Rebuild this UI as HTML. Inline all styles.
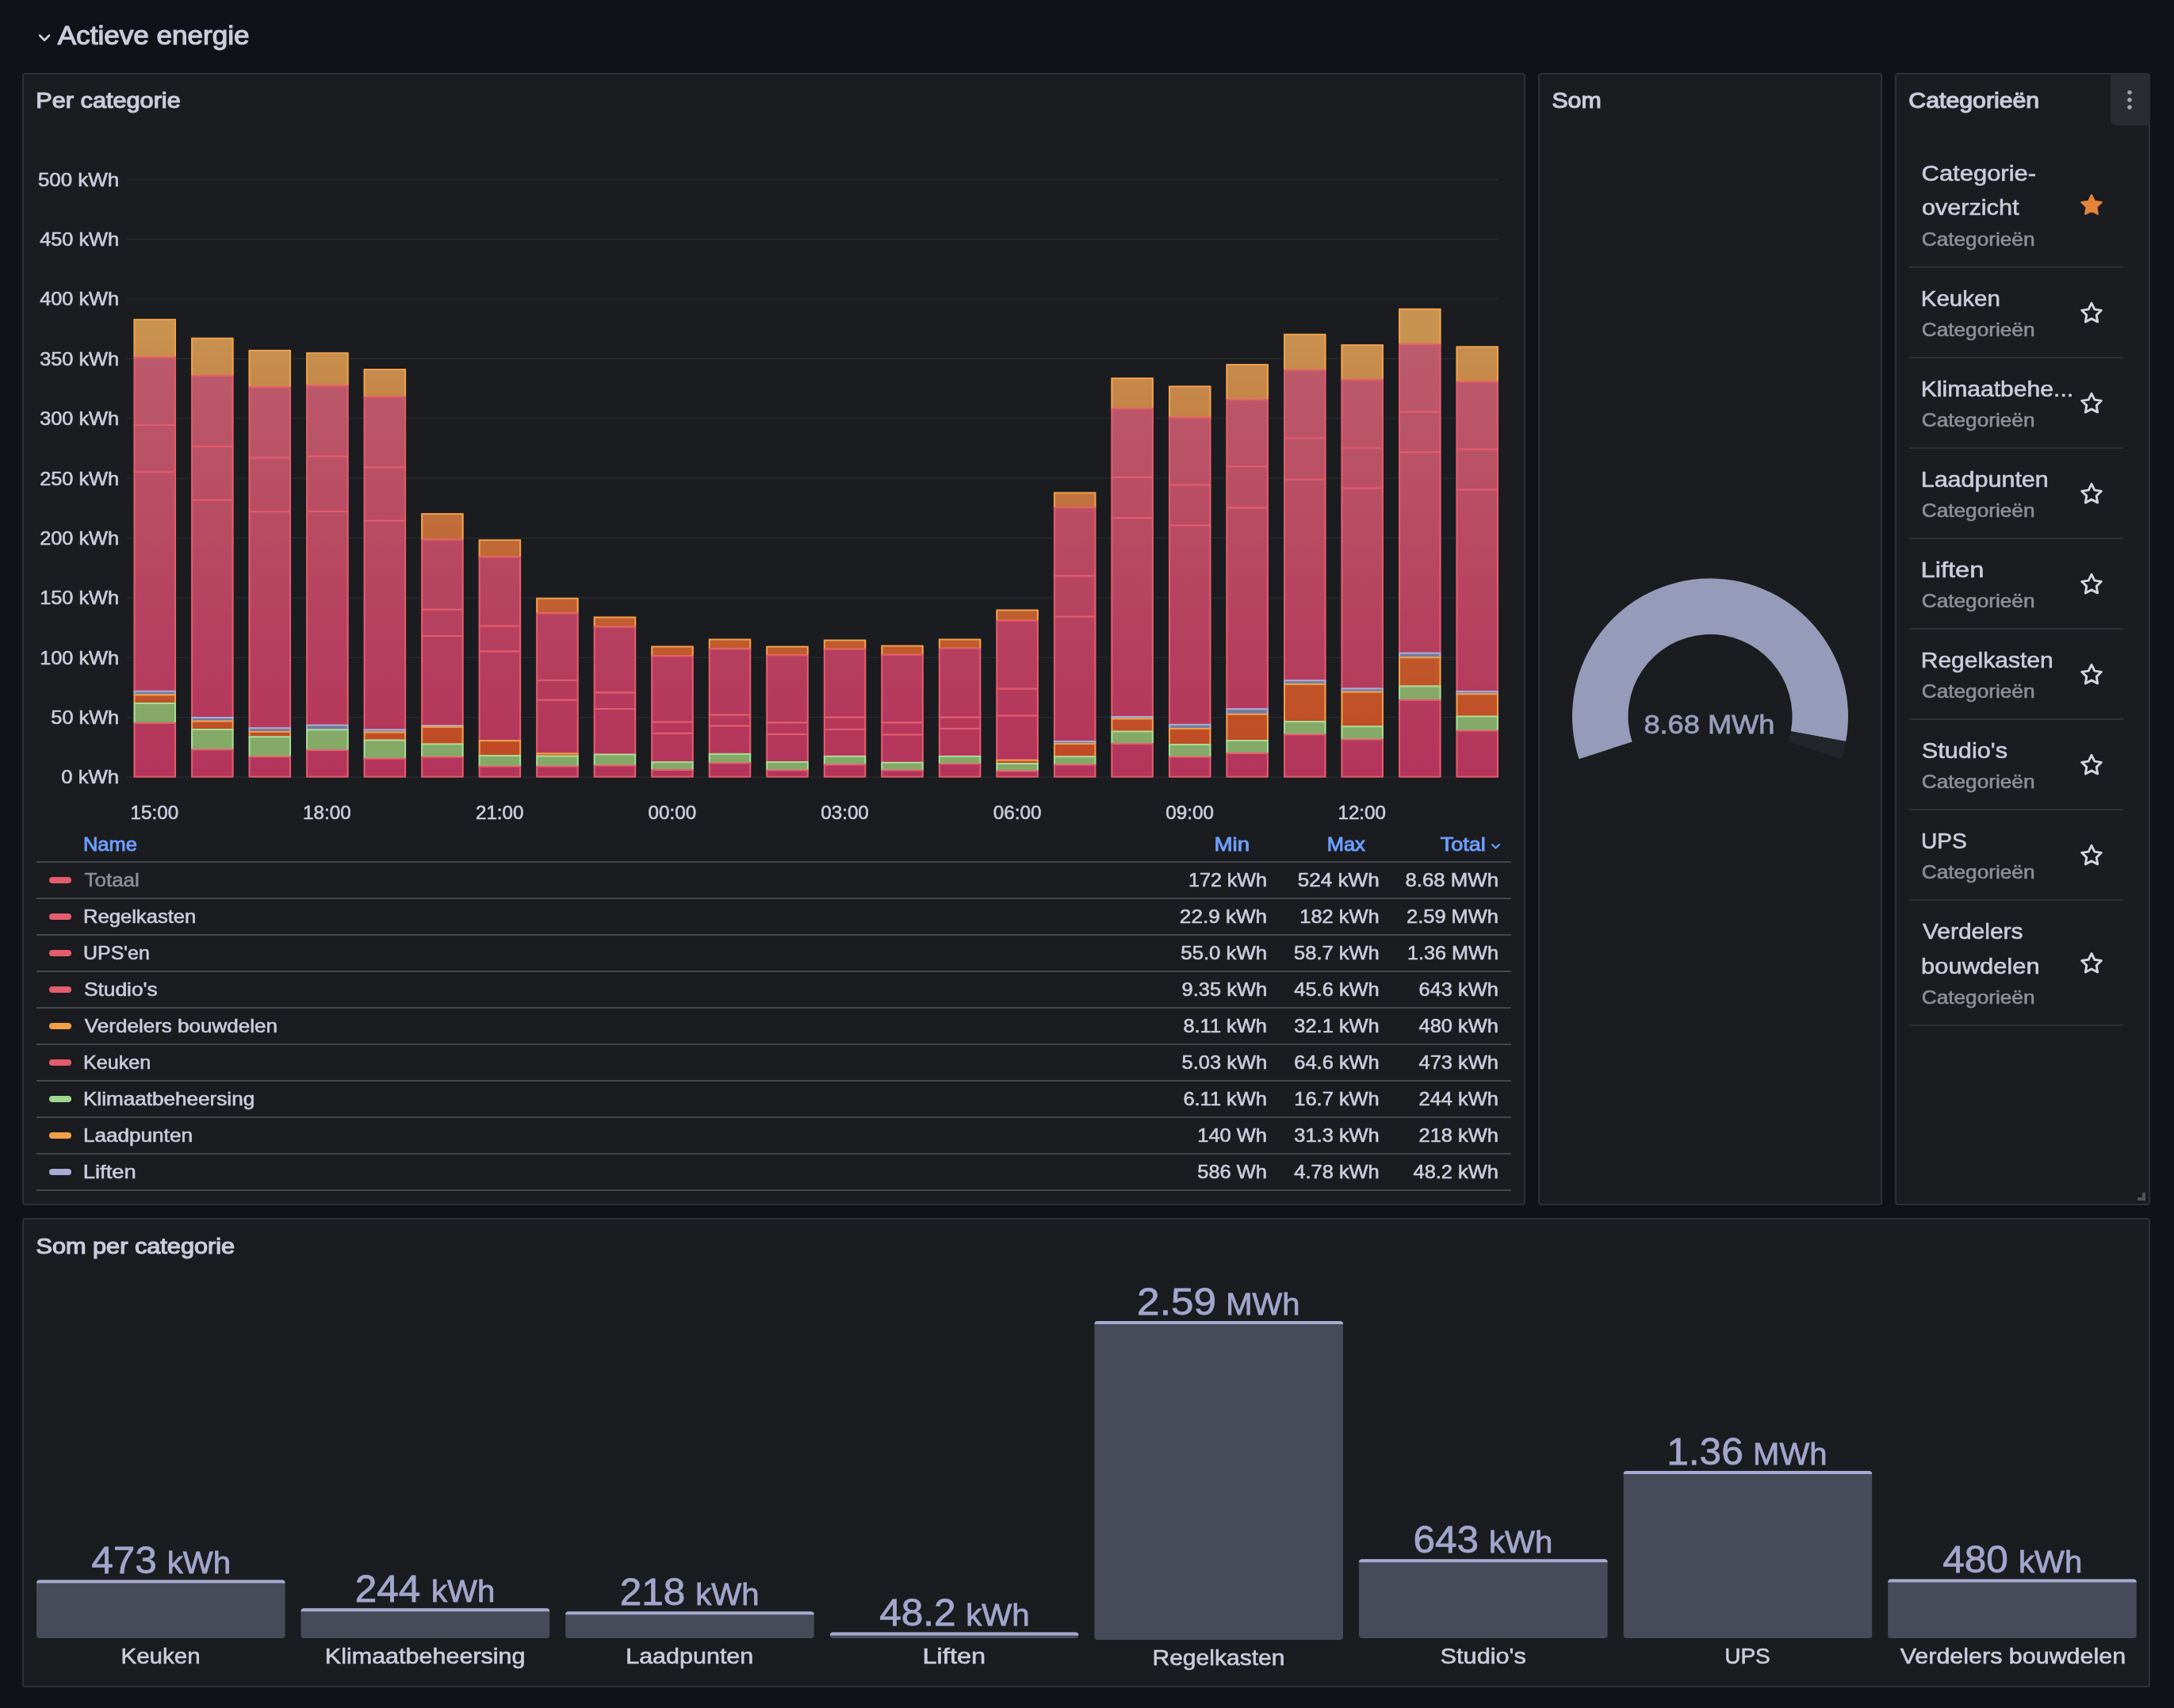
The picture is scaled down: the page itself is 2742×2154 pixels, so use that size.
<!DOCTYPE html>
<html><head><meta charset="utf-8"><title>Actieve energie</title>
<style>
html,body{margin:0;padding:0;background:#111217;width:2742px;height:2154px;overflow:hidden;font-family:"Liberation Sans",sans-serif;}
.panel{position:absolute;box-sizing:border-box;background:#1a1c20;border:2px solid #2f3035;border-radius:4px;}
svg{position:absolute;left:0;top:0;will-change:transform;}
text{font-family:"Liberation Sans",sans-serif;}
.t{fill:#ccccdc;stroke:#ccccdc;stroke-width:0.6px}
.ttl{fill:#ccccdc;stroke:#ccccdc;stroke-width:1.2px}
.hd{fill:#6e9fff;stroke:#6e9fff;stroke-width:0.9px}
.dim{fill:#8e8f98;stroke:#8e8f98;stroke-width:0.6px}
.gauge{fill:#9a9dbc;stroke:#9a9dbc;stroke-width:0.8px}
.bv{fill:#a3a6cc;stroke:#a3a6cc;stroke-width:0.8px}
</style></head><body>
<div class="panel" style="left:28px;top:92px;width:1896px;height:1428px"></div>
<div class="panel" style="left:1940px;top:92px;width:434px;height:1428px"></div>
<div class="panel" style="left:2390px;top:92px;width:322px;height:1428px"></div>
<div class="panel" style="left:28px;top:1536px;width:2684px;height:592px"></div>
<div style="position:absolute;left:2662px;top:92px;width:50px;height:66px;background:#2a2c31;border-radius:0 4px 0 6px"></div>
<svg width="2742" height="2154" viewBox="0 0 2742 2154">
<path d="M50.2 44.8 L56.1 50.7 L62 44.8" fill="none" stroke="#ccccdc" stroke-width="2.7" stroke-linecap="round" stroke-linejoin="round"/>
<text x="72.70" y="56.1" class="ttl" style="font-size:33px;" textLength="241.97" lengthAdjust="spacingAndGlyphs">Actieve energie</text>
<text x="45.39" y="136.2" class="ttl" style="font-size:28px;" textLength="182.35" lengthAdjust="spacingAndGlyphs">Per categorie</text>
<text x="1957.40" y="136.3" class="ttl" style="font-size:28px;" textLength="62.18" lengthAdjust="spacingAndGlyphs">Som</text>
<text x="2407.39" y="136.3" class="ttl" style="font-size:28px;" textLength="164.75" lengthAdjust="spacingAndGlyphs">Categorieën</text>
<text x="45.49" y="1580.5" class="ttl" style="font-size:28px;" textLength="250.61" lengthAdjust="spacingAndGlyphs">Som per categorie</text>
<circle cx="2686" cy="116.6" r="2.7" fill="#a5a6ad"/>
<circle cx="2686" cy="126" r="2.7" fill="#a5a6ad"/>
<circle cx="2686" cy="135.3" r="2.7" fill="#a5a6ad"/>
<path d="M2696 1510 h6 v-6 h4 v10 h-10 z" fill="#525358"/>
<defs><linearGradient id="gr" gradientUnits="userSpaceOnUse" x1="0" y1="226" x2="0" y2="980"><stop offset="0" stop-color="#be6470"/><stop offset="0.31" stop-color="#bb5a6a"/><stop offset="0.55" stop-color="#b94d63"/><stop offset="0.76" stop-color="#b6405f"/><stop offset="1" stop-color="#b4345b"/></linearGradient><linearGradient id="go" gradientUnits="userSpaceOnUse" x1="0" y1="226" x2="0" y2="980"><stop offset="0" stop-color="#cc9e58"/><stop offset="0.26" stop-color="#c8924f"/><stop offset="0.54" stop-color="#c0713d"/><stop offset="0.72" stop-color="#c05f2f"/><stop offset="1" stop-color="#c04722"/></linearGradient><linearGradient id="gg" gradientUnits="userSpaceOnUse" x1="0" y1="226" x2="0" y2="980"><stop offset="0" stop-color="#8fae72"/><stop offset="1" stop-color="#84a866"/></linearGradient><linearGradient id="gl" gradientUnits="userSpaceOnUse" x1="0" y1="226" x2="0" y2="980"><stop offset="0" stop-color="#8a8fb5"/><stop offset="1" stop-color="#6d7898"/></linearGradient></defs>
<rect x="160" y="979.5" width="1730" height="1" fill="#2c2e33"/>
<rect x="160" y="904.13" width="1730" height="1" fill="#2c2e33"/>
<rect x="160" y="828.76" width="1730" height="1" fill="#2c2e33"/>
<rect x="160" y="753.39" width="1730" height="1" fill="#2c2e33"/>
<rect x="160" y="678.02" width="1730" height="1" fill="#2c2e33"/>
<rect x="160" y="602.65" width="1730" height="1" fill="#2c2e33"/>
<rect x="160" y="527.28" width="1730" height="1" fill="#2c2e33"/>
<rect x="160" y="451.91" width="1730" height="1" fill="#2c2e33"/>
<rect x="160" y="376.54" width="1730" height="1" fill="#2c2e33"/>
<rect x="160" y="301.17" width="1730" height="1" fill="#2c2e33"/>
<rect x="160" y="225.8" width="1730" height="1" fill="#2c2e33"/>
<rect x="168.6" y="403.1" width="53.4" height="47.6" fill="url(#go)"/><rect x="169.6" y="403.1" width="51.4" height="47.6" fill="none" stroke="#f0a04c" stroke-width="2"/>
<rect x="168.6" y="450.7" width="53.4" height="85.3" fill="url(#gr)"/><rect x="169.6" y="450.7" width="51.4" height="85.3" fill="none" stroke="#e45c6c" stroke-width="2"/>
<rect x="168.6" y="536" width="53.4" height="59.4" fill="url(#gr)"/><rect x="169.6" y="536" width="51.4" height="59.4" fill="none" stroke="#e45c6c" stroke-width="2"/>
<rect x="168.6" y="595.4" width="53.4" height="276.4" fill="url(#gr)"/><rect x="169.6" y="595.4" width="51.4" height="276.4" fill="none" stroke="#e45c6c" stroke-width="2"/>
<rect x="168.6" y="871.8" width="53.4" height="4.6" fill="url(#gl)"/><rect x="169.6" y="871.8" width="51.4" height="4.6" fill="none" stroke="#aaacd4" stroke-width="2"/>
<rect x="168.6" y="876.4" width="53.4" height="10.6" fill="url(#go)"/><rect x="169.6" y="876.4" width="51.4" height="10.6" fill="none" stroke="#f0a04c" stroke-width="2"/>
<rect x="168.6" y="887" width="53.4" height="25" fill="url(#gg)"/><rect x="169.6" y="887" width="51.4" height="25" fill="none" stroke="#a6dc98" stroke-width="2"/>
<rect x="168.6" y="912" width="53.4" height="67.6" fill="url(#gr)"/><rect x="169.6" y="912" width="51.4" height="67.6" fill="none" stroke="#e45c6c" stroke-width="2"/>
<rect x="241.12" y="426.7" width="53.4" height="47.2" fill="url(#go)"/><rect x="242.12" y="426.7" width="51.4" height="47.2" fill="none" stroke="#f0a04c" stroke-width="2"/>
<rect x="241.12" y="473.9" width="53.4" height="89" fill="url(#gr)"/><rect x="242.12" y="473.9" width="51.4" height="89" fill="none" stroke="#e45c6c" stroke-width="2"/>
<rect x="241.12" y="562.9" width="53.4" height="67.8" fill="url(#gr)"/><rect x="242.12" y="562.9" width="51.4" height="67.8" fill="none" stroke="#e45c6c" stroke-width="2"/>
<rect x="241.12" y="630.7" width="53.4" height="274.3" fill="url(#gr)"/><rect x="242.12" y="630.7" width="51.4" height="274.3" fill="none" stroke="#e45c6c" stroke-width="2"/>
<rect x="241.12" y="905" width="53.4" height="4.6" fill="url(#gl)"/><rect x="242.12" y="905" width="51.4" height="4.6" fill="none" stroke="#aaacd4" stroke-width="2"/>
<rect x="241.12" y="909.6" width="53.4" height="10.4" fill="url(#go)"/><rect x="242.12" y="909.6" width="51.4" height="10.4" fill="none" stroke="#f0a04c" stroke-width="2"/>
<rect x="241.12" y="920" width="53.4" height="25.4" fill="url(#gg)"/><rect x="242.12" y="920" width="51.4" height="25.4" fill="none" stroke="#a6dc98" stroke-width="2"/>
<rect x="241.12" y="945.4" width="53.4" height="34.2" fill="url(#gr)"/><rect x="242.12" y="945.4" width="51.4" height="34.2" fill="none" stroke="#e45c6c" stroke-width="2"/>
<rect x="313.64" y="442.1" width="53.4" height="46.1" fill="url(#go)"/><rect x="314.64" y="442.1" width="51.4" height="46.1" fill="none" stroke="#f0a04c" stroke-width="2"/>
<rect x="313.64" y="488.2" width="53.4" height="89.3" fill="url(#gr)"/><rect x="314.64" y="488.2" width="51.4" height="89.3" fill="none" stroke="#e45c6c" stroke-width="2"/>
<rect x="313.64" y="577.5" width="53.4" height="67.9" fill="url(#gr)"/><rect x="314.64" y="577.5" width="51.4" height="67.9" fill="none" stroke="#e45c6c" stroke-width="2"/>
<rect x="313.64" y="645.4" width="53.4" height="272.8" fill="url(#gr)"/><rect x="314.64" y="645.4" width="51.4" height="272.8" fill="none" stroke="#e45c6c" stroke-width="2"/>
<rect x="313.64" y="918.2" width="53.4" height="4.7" fill="url(#gl)"/><rect x="314.64" y="918.2" width="51.4" height="4.7" fill="none" stroke="#aaacd4" stroke-width="2"/>
<rect x="313.64" y="922.9" width="53.4" height="6.4" fill="url(#go)"/><rect x="314.64" y="922.9" width="51.4" height="6.4" fill="none" stroke="#f0a04c" stroke-width="2"/>
<rect x="313.64" y="929.3" width="53.4" height="25" fill="url(#gg)"/><rect x="314.64" y="929.3" width="51.4" height="25" fill="none" stroke="#a6dc98" stroke-width="2"/>
<rect x="313.64" y="954.3" width="53.4" height="25.3" fill="url(#gr)"/><rect x="314.64" y="954.3" width="51.4" height="25.3" fill="none" stroke="#e45c6c" stroke-width="2"/>
<rect x="386.16" y="445.3" width="53.4" height="41.1" fill="url(#go)"/><rect x="387.16" y="445.3" width="51.4" height="41.1" fill="none" stroke="#f0a04c" stroke-width="2"/>
<rect x="386.16" y="486.4" width="53.4" height="89.3" fill="url(#gr)"/><rect x="387.16" y="486.4" width="51.4" height="89.3" fill="none" stroke="#e45c6c" stroke-width="2"/>
<rect x="386.16" y="575.7" width="53.4" height="69.3" fill="url(#gr)"/><rect x="387.16" y="575.7" width="51.4" height="69.3" fill="none" stroke="#e45c6c" stroke-width="2"/>
<rect x="386.16" y="645" width="53.4" height="269.6" fill="url(#gr)"/><rect x="387.16" y="645" width="51.4" height="269.6" fill="none" stroke="#e45c6c" stroke-width="2"/>
<rect x="386.16" y="914.6" width="53.4" height="5.8" fill="url(#gl)"/><rect x="387.16" y="914.6" width="51.4" height="5.8" fill="none" stroke="#aaacd4" stroke-width="2"/>
<rect x="386.16" y="920.4" width="53.4" height="25.7" fill="url(#gg)"/><rect x="387.16" y="920.4" width="51.4" height="25.7" fill="none" stroke="#a6dc98" stroke-width="2"/>
<rect x="386.16" y="946.1" width="53.4" height="33.5" fill="url(#gr)"/><rect x="387.16" y="946.1" width="51.4" height="33.5" fill="none" stroke="#e45c6c" stroke-width="2"/>
<rect x="458.68" y="466" width="53.4" height="34.4" fill="url(#go)"/><rect x="459.68" y="466" width="51.4" height="34.4" fill="none" stroke="#f0a04c" stroke-width="2"/>
<rect x="458.68" y="500.4" width="53.4" height="89.2" fill="url(#gr)"/><rect x="459.68" y="500.4" width="51.4" height="89.2" fill="none" stroke="#e45c6c" stroke-width="2"/>
<rect x="458.68" y="589.6" width="53.4" height="67.2" fill="url(#gr)"/><rect x="459.68" y="589.6" width="51.4" height="67.2" fill="none" stroke="#e45c6c" stroke-width="2"/>
<rect x="458.68" y="656.8" width="53.4" height="263.6" fill="url(#gr)"/><rect x="459.68" y="656.8" width="51.4" height="263.6" fill="none" stroke="#e45c6c" stroke-width="2"/>
<rect x="458.68" y="920.4" width="53.4" height="3.2" fill="url(#gl)"/><rect x="459.68" y="920.4" width="51.4" height="3.2" fill="none" stroke="#aaacd4" stroke-width="2"/>
<rect x="458.68" y="923.6" width="53.4" height="10" fill="url(#go)"/><rect x="459.68" y="923.6" width="51.4" height="10" fill="none" stroke="#f0a04c" stroke-width="2"/>
<rect x="458.68" y="933.6" width="53.4" height="23.2" fill="url(#gg)"/><rect x="459.68" y="933.6" width="51.4" height="23.2" fill="none" stroke="#a6dc98" stroke-width="2"/>
<rect x="458.68" y="956.8" width="53.4" height="22.8" fill="url(#gr)"/><rect x="459.68" y="956.8" width="51.4" height="22.8" fill="none" stroke="#e45c6c" stroke-width="2"/>
<rect x="531.2" y="648.1" width="53.4" height="32.6" fill="url(#go)"/><rect x="532.2" y="648.1" width="51.4" height="32.6" fill="none" stroke="#f0a04c" stroke-width="2"/>
<rect x="531.2" y="680.7" width="53.4" height="88.1" fill="url(#gr)"/><rect x="532.2" y="680.7" width="51.4" height="88.1" fill="none" stroke="#e45c6c" stroke-width="2"/>
<rect x="531.2" y="768.8" width="53.4" height="33.2" fill="url(#gr)"/><rect x="532.2" y="768.8" width="51.4" height="33.2" fill="none" stroke="#e45c6c" stroke-width="2"/>
<rect x="531.2" y="802" width="53.4" height="113.3" fill="url(#gr)"/><rect x="532.2" y="802" width="51.4" height="113.3" fill="none" stroke="#e45c6c" stroke-width="2"/>
<rect x="531.2" y="915.3" width="53.4" height="1.5" fill="url(#gl)"/><rect x="532.2" y="915.3" width="51.4" height="1.5" fill="none" stroke="#aaacd4" stroke-width="2"/>
<rect x="531.2" y="916.8" width="53.4" height="21.7" fill="url(#go)"/><rect x="532.2" y="916.8" width="51.4" height="21.7" fill="none" stroke="#f0a04c" stroke-width="2"/>
<rect x="531.2" y="938.5" width="53.4" height="16.2" fill="url(#gg)"/><rect x="532.2" y="938.5" width="51.4" height="16.2" fill="none" stroke="#a6dc98" stroke-width="2"/>
<rect x="531.2" y="954.7" width="53.4" height="24.9" fill="url(#gr)"/><rect x="532.2" y="954.7" width="51.4" height="24.9" fill="none" stroke="#e45c6c" stroke-width="2"/>
<rect x="603.72" y="681.2" width="53.4" height="21.1" fill="url(#go)"/><rect x="604.72" y="681.2" width="51.4" height="21.1" fill="none" stroke="#f0a04c" stroke-width="2"/>
<rect x="603.72" y="702.3" width="53.4" height="87.3" fill="url(#gr)"/><rect x="604.72" y="702.3" width="51.4" height="87.3" fill="none" stroke="#e45c6c" stroke-width="2"/>
<rect x="603.72" y="789.6" width="53.4" height="31.9" fill="url(#gr)"/><rect x="604.72" y="789.6" width="51.4" height="31.9" fill="none" stroke="#e45c6c" stroke-width="2"/>
<rect x="603.72" y="821.5" width="53.4" height="112.6" fill="url(#gr)"/><rect x="604.72" y="821.5" width="51.4" height="112.6" fill="none" stroke="#e45c6c" stroke-width="2"/>
<rect x="603.72" y="934.1" width="53.4" height="18.9" fill="url(#go)"/><rect x="604.72" y="934.1" width="51.4" height="18.9" fill="none" stroke="#f0a04c" stroke-width="2"/>
<rect x="603.72" y="953" width="53.4" height="13.6" fill="url(#gg)"/><rect x="604.72" y="953" width="51.4" height="13.6" fill="none" stroke="#a6dc98" stroke-width="2"/>
<rect x="603.72" y="966.6" width="53.4" height="13" fill="url(#gr)"/><rect x="604.72" y="966.6" width="51.4" height="13" fill="none" stroke="#e45c6c" stroke-width="2"/>
<rect x="676.24" y="754.7" width="53.4" height="18.7" fill="url(#go)"/><rect x="677.24" y="754.7" width="51.4" height="18.7" fill="none" stroke="#f0a04c" stroke-width="2"/>
<rect x="676.24" y="773.4" width="53.4" height="84.5" fill="url(#gr)"/><rect x="677.24" y="773.4" width="51.4" height="84.5" fill="none" stroke="#e45c6c" stroke-width="2"/>
<rect x="676.24" y="857.9" width="53.4" height="24.9" fill="url(#gr)"/><rect x="677.24" y="857.9" width="51.4" height="24.9" fill="none" stroke="#e45c6c" stroke-width="2"/>
<rect x="676.24" y="882.8" width="53.4" height="67.6" fill="url(#gr)"/><rect x="677.24" y="882.8" width="51.4" height="67.6" fill="none" stroke="#e45c6c" stroke-width="2"/>
<rect x="676.24" y="950.4" width="53.4" height="3.2" fill="url(#go)"/><rect x="677.24" y="950.4" width="51.4" height="3.2" fill="none" stroke="#f0a04c" stroke-width="2"/>
<rect x="676.24" y="953.6" width="53.4" height="13" fill="url(#gg)"/><rect x="677.24" y="953.6" width="51.4" height="13" fill="none" stroke="#a6dc98" stroke-width="2"/>
<rect x="676.24" y="966.6" width="53.4" height="13" fill="url(#gr)"/><rect x="677.24" y="966.6" width="51.4" height="13" fill="none" stroke="#e45c6c" stroke-width="2"/>
<rect x="748.76" y="778.5" width="53.4" height="12.2" fill="url(#go)"/><rect x="749.76" y="778.5" width="51.4" height="12.2" fill="none" stroke="#f0a04c" stroke-width="2"/>
<rect x="748.76" y="790.7" width="53.4" height="82.8" fill="url(#gr)"/><rect x="749.76" y="790.7" width="51.4" height="82.8" fill="none" stroke="#e45c6c" stroke-width="2"/>
<rect x="748.76" y="873.5" width="53.4" height="20.5" fill="url(#gr)"/><rect x="749.76" y="873.5" width="51.4" height="20.5" fill="none" stroke="#e45c6c" stroke-width="2"/>
<rect x="748.76" y="894" width="53.4" height="57.5" fill="url(#gr)"/><rect x="749.76" y="894" width="51.4" height="57.5" fill="none" stroke="#e45c6c" stroke-width="2"/>
<rect x="748.76" y="951.5" width="53.4" height="14" fill="url(#gg)"/><rect x="749.76" y="951.5" width="51.4" height="14" fill="none" stroke="#a6dc98" stroke-width="2"/>
<rect x="748.76" y="965.5" width="53.4" height="14.1" fill="url(#gr)"/><rect x="749.76" y="965.5" width="51.4" height="14.1" fill="none" stroke="#e45c6c" stroke-width="2"/>
<rect x="821.28" y="815.5" width="53.4" height="12" fill="url(#go)"/><rect x="822.28" y="815.5" width="51.4" height="12" fill="none" stroke="#f0a04c" stroke-width="2"/>
<rect x="821.28" y="827.5" width="53.4" height="83.2" fill="url(#gr)"/><rect x="822.28" y="827.5" width="51.4" height="83.2" fill="none" stroke="#e45c6c" stroke-width="2"/>
<rect x="821.28" y="910.7" width="53.4" height="14.1" fill="url(#gr)"/><rect x="822.28" y="910.7" width="51.4" height="14.1" fill="none" stroke="#e45c6c" stroke-width="2"/>
<rect x="821.28" y="924.8" width="53.4" height="36.4" fill="url(#gr)"/><rect x="822.28" y="924.8" width="51.4" height="36.4" fill="none" stroke="#e45c6c" stroke-width="2"/>
<rect x="821.28" y="961.2" width="53.4" height="9.8" fill="url(#gg)"/><rect x="822.28" y="961.2" width="51.4" height="9.8" fill="none" stroke="#a6dc98" stroke-width="2"/>
<rect x="821.28" y="971" width="53.4" height="8.6" fill="url(#gr)"/><rect x="822.28" y="971" width="51.4" height="8.6" fill="none" stroke="#e45c6c" stroke-width="2"/>
<rect x="893.8" y="806.5" width="53.4" height="11.8" fill="url(#go)"/><rect x="894.8" y="806.5" width="51.4" height="11.8" fill="none" stroke="#f0a04c" stroke-width="2"/>
<rect x="893.8" y="818.3" width="53.4" height="83.4" fill="url(#gr)"/><rect x="894.8" y="818.3" width="51.4" height="83.4" fill="none" stroke="#e45c6c" stroke-width="2"/>
<rect x="893.8" y="901.7" width="53.4" height="13.7" fill="url(#gr)"/><rect x="894.8" y="901.7" width="51.4" height="13.7" fill="none" stroke="#e45c6c" stroke-width="2"/>
<rect x="893.8" y="915.4" width="53.4" height="35.5" fill="url(#gr)"/><rect x="894.8" y="915.4" width="51.4" height="35.5" fill="none" stroke="#e45c6c" stroke-width="2"/>
<rect x="893.8" y="950.9" width="53.4" height="11.5" fill="url(#gg)"/><rect x="894.8" y="950.9" width="51.4" height="11.5" fill="none" stroke="#a6dc98" stroke-width="2"/>
<rect x="893.8" y="962.4" width="53.4" height="17.2" fill="url(#gr)"/><rect x="894.8" y="962.4" width="51.4" height="17.2" fill="none" stroke="#e45c6c" stroke-width="2"/>
<rect x="966.32" y="815.6" width="53.4" height="10.8" fill="url(#go)"/><rect x="967.32" y="815.6" width="51.4" height="10.8" fill="none" stroke="#f0a04c" stroke-width="2"/>
<rect x="966.32" y="826.4" width="53.4" height="85" fill="url(#gr)"/><rect x="967.32" y="826.4" width="51.4" height="85" fill="none" stroke="#e45c6c" stroke-width="2"/>
<rect x="966.32" y="911.4" width="53.4" height="14.6" fill="url(#gr)"/><rect x="967.32" y="911.4" width="51.4" height="14.6" fill="none" stroke="#e45c6c" stroke-width="2"/>
<rect x="966.32" y="926" width="53.4" height="35" fill="url(#gr)"/><rect x="967.32" y="926" width="51.4" height="35" fill="none" stroke="#e45c6c" stroke-width="2"/>
<rect x="966.32" y="961" width="53.4" height="10.5" fill="url(#gg)"/><rect x="967.32" y="961" width="51.4" height="10.5" fill="none" stroke="#a6dc98" stroke-width="2"/>
<rect x="966.32" y="971.5" width="53.4" height="8.1" fill="url(#gr)"/><rect x="967.32" y="971.5" width="51.4" height="8.1" fill="none" stroke="#e45c6c" stroke-width="2"/>
<rect x="1038.84" y="807.5" width="53.4" height="11.2" fill="url(#go)"/><rect x="1039.84" y="807.5" width="51.4" height="11.2" fill="none" stroke="#f0a04c" stroke-width="2"/>
<rect x="1038.84" y="818.7" width="53.4" height="86" fill="url(#gr)"/><rect x="1039.84" y="818.7" width="51.4" height="86" fill="none" stroke="#e45c6c" stroke-width="2"/>
<rect x="1038.84" y="904.7" width="53.4" height="15.2" fill="url(#gr)"/><rect x="1039.84" y="904.7" width="51.4" height="15.2" fill="none" stroke="#e45c6c" stroke-width="2"/>
<rect x="1038.84" y="919.9" width="53.4" height="34" fill="url(#gr)"/><rect x="1039.84" y="919.9" width="51.4" height="34" fill="none" stroke="#e45c6c" stroke-width="2"/>
<rect x="1038.84" y="953.9" width="53.4" height="10.5" fill="url(#gg)"/><rect x="1039.84" y="953.9" width="51.4" height="10.5" fill="none" stroke="#a6dc98" stroke-width="2"/>
<rect x="1038.84" y="964.4" width="53.4" height="15.2" fill="url(#gr)"/><rect x="1039.84" y="964.4" width="51.4" height="15.2" fill="none" stroke="#e45c6c" stroke-width="2"/>
<rect x="1111.36" y="814.6" width="53.4" height="11.2" fill="url(#go)"/><rect x="1112.36" y="814.6" width="51.4" height="11.2" fill="none" stroke="#f0a04c" stroke-width="2"/>
<rect x="1111.36" y="825.8" width="53.4" height="85.6" fill="url(#gr)"/><rect x="1112.36" y="825.8" width="51.4" height="85.6" fill="none" stroke="#e45c6c" stroke-width="2"/>
<rect x="1111.36" y="911.4" width="53.4" height="15.2" fill="url(#gr)"/><rect x="1112.36" y="911.4" width="51.4" height="15.2" fill="none" stroke="#e45c6c" stroke-width="2"/>
<rect x="1111.36" y="926.6" width="53.4" height="35.2" fill="url(#gr)"/><rect x="1112.36" y="926.6" width="51.4" height="35.2" fill="none" stroke="#e45c6c" stroke-width="2"/>
<rect x="1111.36" y="961.8" width="53.4" height="9.7" fill="url(#gg)"/><rect x="1112.36" y="961.8" width="51.4" height="9.7" fill="none" stroke="#a6dc98" stroke-width="2"/>
<rect x="1111.36" y="971.5" width="53.4" height="8.1" fill="url(#gr)"/><rect x="1112.36" y="971.5" width="51.4" height="8.1" fill="none" stroke="#e45c6c" stroke-width="2"/>
<rect x="1183.88" y="806.5" width="53.4" height="11.2" fill="url(#go)"/><rect x="1184.88" y="806.5" width="51.4" height="11.2" fill="none" stroke="#f0a04c" stroke-width="2"/>
<rect x="1183.88" y="817.7" width="53.4" height="87" fill="url(#gr)"/><rect x="1184.88" y="817.7" width="51.4" height="87" fill="none" stroke="#e45c6c" stroke-width="2"/>
<rect x="1183.88" y="904.7" width="53.4" height="14.2" fill="url(#gr)"/><rect x="1184.88" y="904.7" width="51.4" height="14.2" fill="none" stroke="#e45c6c" stroke-width="2"/>
<rect x="1183.88" y="918.9" width="53.4" height="35" fill="url(#gr)"/><rect x="1184.88" y="918.9" width="51.4" height="35" fill="none" stroke="#e45c6c" stroke-width="2"/>
<rect x="1183.88" y="953.9" width="53.4" height="9.5" fill="url(#gg)"/><rect x="1184.88" y="953.9" width="51.4" height="9.5" fill="none" stroke="#a6dc98" stroke-width="2"/>
<rect x="1183.88" y="963.4" width="53.4" height="16.2" fill="url(#gr)"/><rect x="1184.88" y="963.4" width="51.4" height="16.2" fill="none" stroke="#e45c6c" stroke-width="2"/>
<rect x="1256.4" y="769.5" width="53.4" height="13.2" fill="url(#go)"/><rect x="1257.4" y="769.5" width="51.4" height="13.2" fill="none" stroke="#f0a04c" stroke-width="2"/>
<rect x="1256.4" y="782.7" width="53.4" height="86" fill="url(#gr)"/><rect x="1257.4" y="782.7" width="51.4" height="86" fill="none" stroke="#e45c6c" stroke-width="2"/>
<rect x="1256.4" y="868.7" width="53.4" height="34" fill="url(#gr)"/><rect x="1257.4" y="868.7" width="51.4" height="34" fill="none" stroke="#e45c6c" stroke-width="2"/>
<rect x="1256.4" y="902.7" width="53.4" height="56" fill="url(#gr)"/><rect x="1257.4" y="902.7" width="51.4" height="56" fill="none" stroke="#e45c6c" stroke-width="2"/>
<rect x="1256.4" y="958.7" width="53.4" height="4.3" fill="url(#go)"/><rect x="1257.4" y="958.7" width="51.4" height="4.3" fill="none" stroke="#f0a04c" stroke-width="2"/>
<rect x="1256.4" y="963" width="53.4" height="9.5" fill="url(#gg)"/><rect x="1257.4" y="963" width="51.4" height="9.5" fill="none" stroke="#a6dc98" stroke-width="2"/>
<rect x="1256.4" y="972.5" width="53.4" height="7.1" fill="url(#gr)"/><rect x="1257.4" y="972.5" width="51.4" height="7.1" fill="none" stroke="#e45c6c" stroke-width="2"/>
<rect x="1328.92" y="621.5" width="53.4" height="18.6" fill="url(#go)"/><rect x="1329.92" y="621.5" width="51.4" height="18.6" fill="none" stroke="#f0a04c" stroke-width="2"/>
<rect x="1328.92" y="640.1" width="53.4" height="86.3" fill="url(#gr)"/><rect x="1329.92" y="640.1" width="51.4" height="86.3" fill="none" stroke="#e45c6c" stroke-width="2"/>
<rect x="1328.92" y="726.4" width="53.4" height="51.2" fill="url(#gr)"/><rect x="1329.92" y="726.4" width="51.4" height="51.2" fill="none" stroke="#e45c6c" stroke-width="2"/>
<rect x="1328.92" y="777.6" width="53.4" height="157.4" fill="url(#gr)"/><rect x="1329.92" y="777.6" width="51.4" height="157.4" fill="none" stroke="#e45c6c" stroke-width="2"/>
<rect x="1328.92" y="935" width="53.4" height="3.1" fill="url(#gl)"/><rect x="1329.92" y="935" width="51.4" height="3.1" fill="none" stroke="#aaacd4" stroke-width="2"/>
<rect x="1328.92" y="938.1" width="53.4" height="16.2" fill="url(#go)"/><rect x="1329.92" y="938.1" width="51.4" height="16.2" fill="none" stroke="#f0a04c" stroke-width="2"/>
<rect x="1328.92" y="954.3" width="53.4" height="10.2" fill="url(#gg)"/><rect x="1329.92" y="954.3" width="51.4" height="10.2" fill="none" stroke="#a6dc98" stroke-width="2"/>
<rect x="1328.92" y="964.5" width="53.4" height="15.1" fill="url(#gr)"/><rect x="1329.92" y="964.5" width="51.4" height="15.1" fill="none" stroke="#e45c6c" stroke-width="2"/>
<rect x="1401.44" y="477.1" width="53.4" height="38.2" fill="url(#go)"/><rect x="1402.44" y="477.1" width="51.4" height="38.2" fill="none" stroke="#f0a04c" stroke-width="2"/>
<rect x="1401.44" y="515.3" width="53.4" height="86.6" fill="url(#gr)"/><rect x="1402.44" y="515.3" width="51.4" height="86.6" fill="none" stroke="#e45c6c" stroke-width="2"/>
<rect x="1401.44" y="601.9" width="53.4" height="51.2" fill="url(#gr)"/><rect x="1402.44" y="601.9" width="51.4" height="51.2" fill="none" stroke="#e45c6c" stroke-width="2"/>
<rect x="1401.44" y="653.1" width="53.4" height="250.9" fill="url(#gr)"/><rect x="1402.44" y="653.1" width="51.4" height="250.9" fill="none" stroke="#e45c6c" stroke-width="2"/>
<rect x="1401.44" y="904" width="53.4" height="2.5" fill="url(#gl)"/><rect x="1402.44" y="904" width="51.4" height="2.5" fill="none" stroke="#aaacd4" stroke-width="2"/>
<rect x="1401.44" y="906.5" width="53.4" height="16.1" fill="url(#go)"/><rect x="1402.44" y="906.5" width="51.4" height="16.1" fill="none" stroke="#f0a04c" stroke-width="2"/>
<rect x="1401.44" y="922.6" width="53.4" height="15.5" fill="url(#gg)"/><rect x="1402.44" y="922.6" width="51.4" height="15.5" fill="none" stroke="#a6dc98" stroke-width="2"/>
<rect x="1401.44" y="938.1" width="53.4" height="41.5" fill="url(#gr)"/><rect x="1402.44" y="938.1" width="51.4" height="41.5" fill="none" stroke="#e45c6c" stroke-width="2"/>
<rect x="1473.96" y="487.4" width="53.4" height="39.3" fill="url(#go)"/><rect x="1474.96" y="487.4" width="51.4" height="39.3" fill="none" stroke="#f0a04c" stroke-width="2"/>
<rect x="1473.96" y="526.7" width="53.4" height="84.8" fill="url(#gr)"/><rect x="1474.96" y="526.7" width="51.4" height="84.8" fill="none" stroke="#e45c6c" stroke-width="2"/>
<rect x="1473.96" y="611.5" width="53.4" height="51.2" fill="url(#gr)"/><rect x="1474.96" y="611.5" width="51.4" height="51.2" fill="none" stroke="#e45c6c" stroke-width="2"/>
<rect x="1473.96" y="662.7" width="53.4" height="251.2" fill="url(#gr)"/><rect x="1474.96" y="662.7" width="51.4" height="251.2" fill="none" stroke="#e45c6c" stroke-width="2"/>
<rect x="1473.96" y="913.9" width="53.4" height="5" fill="url(#gl)"/><rect x="1474.96" y="913.9" width="51.4" height="5" fill="none" stroke="#aaacd4" stroke-width="2"/>
<rect x="1473.96" y="918.9" width="53.4" height="20.1" fill="url(#go)"/><rect x="1474.96" y="918.9" width="51.4" height="20.1" fill="none" stroke="#f0a04c" stroke-width="2"/>
<rect x="1473.96" y="939" width="53.4" height="15.6" fill="url(#gg)"/><rect x="1474.96" y="939" width="51.4" height="15.6" fill="none" stroke="#a6dc98" stroke-width="2"/>
<rect x="1473.96" y="954.6" width="53.4" height="25" fill="url(#gr)"/><rect x="1474.96" y="954.6" width="51.4" height="25" fill="none" stroke="#e45c6c" stroke-width="2"/>
<rect x="1546.48" y="459.9" width="53.4" height="44.3" fill="url(#go)"/><rect x="1547.48" y="459.9" width="51.4" height="44.3" fill="none" stroke="#f0a04c" stroke-width="2"/>
<rect x="1546.48" y="504.2" width="53.4" height="84.1" fill="url(#gr)"/><rect x="1547.48" y="504.2" width="51.4" height="84.1" fill="none" stroke="#e45c6c" stroke-width="2"/>
<rect x="1546.48" y="588.3" width="53.4" height="52.2" fill="url(#gr)"/><rect x="1547.48" y="588.3" width="51.4" height="52.2" fill="none" stroke="#e45c6c" stroke-width="2"/>
<rect x="1546.48" y="640.5" width="53.4" height="253.7" fill="url(#gr)"/><rect x="1547.48" y="640.5" width="51.4" height="253.7" fill="none" stroke="#e45c6c" stroke-width="2"/>
<rect x="1546.48" y="894.2" width="53.4" height="6.6" fill="url(#gl)"/><rect x="1547.48" y="894.2" width="51.4" height="6.6" fill="none" stroke="#aaacd4" stroke-width="2"/>
<rect x="1546.48" y="900.8" width="53.4" height="33.2" fill="url(#go)"/><rect x="1547.48" y="900.8" width="51.4" height="33.2" fill="none" stroke="#f0a04c" stroke-width="2"/>
<rect x="1546.48" y="934" width="53.4" height="16.1" fill="url(#gg)"/><rect x="1547.48" y="934" width="51.4" height="16.1" fill="none" stroke="#a6dc98" stroke-width="2"/>
<rect x="1546.48" y="950.1" width="53.4" height="29.5" fill="url(#gr)"/><rect x="1547.48" y="950.1" width="51.4" height="29.5" fill="none" stroke="#e45c6c" stroke-width="2"/>
<rect x="1619" y="421.8" width="53.4" height="45.1" fill="url(#go)"/><rect x="1620" y="421.8" width="51.4" height="45.1" fill="none" stroke="#f0a04c" stroke-width="2"/>
<rect x="1619" y="466.9" width="53.4" height="85.7" fill="url(#gr)"/><rect x="1620" y="466.9" width="51.4" height="85.7" fill="none" stroke="#e45c6c" stroke-width="2"/>
<rect x="1619" y="552.6" width="53.4" height="52.2" fill="url(#gr)"/><rect x="1620" y="552.6" width="51.4" height="52.2" fill="none" stroke="#e45c6c" stroke-width="2"/>
<rect x="1619" y="604.8" width="53.4" height="253.4" fill="url(#gr)"/><rect x="1620" y="604.8" width="51.4" height="253.4" fill="none" stroke="#e45c6c" stroke-width="2"/>
<rect x="1619" y="858.2" width="53.4" height="4.7" fill="url(#gl)"/><rect x="1620" y="858.2" width="51.4" height="4.7" fill="none" stroke="#aaacd4" stroke-width="2"/>
<rect x="1619" y="862.9" width="53.4" height="47.2" fill="url(#go)"/><rect x="1620" y="862.9" width="51.4" height="47.2" fill="none" stroke="#f0a04c" stroke-width="2"/>
<rect x="1619" y="910.1" width="53.4" height="16.3" fill="url(#gg)"/><rect x="1620" y="910.1" width="51.4" height="16.3" fill="none" stroke="#a6dc98" stroke-width="2"/>
<rect x="1619" y="926.4" width="53.4" height="53.2" fill="url(#gr)"/><rect x="1620" y="926.4" width="51.4" height="53.2" fill="none" stroke="#e45c6c" stroke-width="2"/>
<rect x="1691.52" y="435.2" width="53.4" height="43.7" fill="url(#go)"/><rect x="1692.52" y="435.2" width="51.4" height="43.7" fill="none" stroke="#f0a04c" stroke-width="2"/>
<rect x="1691.52" y="478.9" width="53.4" height="86" fill="url(#gr)"/><rect x="1692.52" y="478.9" width="51.4" height="86" fill="none" stroke="#e45c6c" stroke-width="2"/>
<rect x="1691.52" y="564.9" width="53.4" height="50.8" fill="url(#gr)"/><rect x="1692.52" y="564.9" width="51.4" height="50.8" fill="none" stroke="#e45c6c" stroke-width="2"/>
<rect x="1691.52" y="615.7" width="53.4" height="252.7" fill="url(#gr)"/><rect x="1692.52" y="615.7" width="51.4" height="252.7" fill="none" stroke="#e45c6c" stroke-width="2"/>
<rect x="1691.52" y="868.4" width="53.4" height="4.3" fill="url(#gl)"/><rect x="1692.52" y="868.4" width="51.4" height="4.3" fill="none" stroke="#aaacd4" stroke-width="2"/>
<rect x="1691.52" y="872.7" width="53.4" height="43.6" fill="url(#go)"/><rect x="1692.52" y="872.7" width="51.4" height="43.6" fill="none" stroke="#f0a04c" stroke-width="2"/>
<rect x="1691.52" y="916.3" width="53.4" height="16.3" fill="url(#gg)"/><rect x="1692.52" y="916.3" width="51.4" height="16.3" fill="none" stroke="#a6dc98" stroke-width="2"/>
<rect x="1691.52" y="932.6" width="53.4" height="47" fill="url(#gr)"/><rect x="1692.52" y="932.6" width="51.4" height="47" fill="none" stroke="#e45c6c" stroke-width="2"/>
<rect x="1764.04" y="389.9" width="53.4" height="44.3" fill="url(#go)"/><rect x="1765.04" y="389.9" width="51.4" height="44.3" fill="none" stroke="#f0a04c" stroke-width="2"/>
<rect x="1764.04" y="434.2" width="53.4" height="85.3" fill="url(#gr)"/><rect x="1765.04" y="434.2" width="51.4" height="85.3" fill="none" stroke="#e45c6c" stroke-width="2"/>
<rect x="1764.04" y="519.5" width="53.4" height="50.9" fill="url(#gr)"/><rect x="1765.04" y="519.5" width="51.4" height="50.9" fill="none" stroke="#e45c6c" stroke-width="2"/>
<rect x="1764.04" y="570.4" width="53.4" height="253.3" fill="url(#gr)"/><rect x="1765.04" y="570.4" width="51.4" height="253.3" fill="none" stroke="#e45c6c" stroke-width="2"/>
<rect x="1764.04" y="823.7" width="53.4" height="5.5" fill="url(#gl)"/><rect x="1765.04" y="823.7" width="51.4" height="5.5" fill="none" stroke="#aaacd4" stroke-width="2"/>
<rect x="1764.04" y="829.2" width="53.4" height="36.3" fill="url(#go)"/><rect x="1765.04" y="829.2" width="51.4" height="36.3" fill="none" stroke="#f0a04c" stroke-width="2"/>
<rect x="1764.04" y="865.5" width="53.4" height="17.4" fill="url(#gg)"/><rect x="1765.04" y="865.5" width="51.4" height="17.4" fill="none" stroke="#a6dc98" stroke-width="2"/>
<rect x="1764.04" y="882.9" width="53.4" height="96.7" fill="url(#gr)"/><rect x="1765.04" y="882.9" width="51.4" height="96.7" fill="none" stroke="#e45c6c" stroke-width="2"/>
<rect x="1836.56" y="437.4" width="53.4" height="44.4" fill="url(#go)"/><rect x="1837.56" y="437.4" width="51.4" height="44.4" fill="none" stroke="#f0a04c" stroke-width="2"/>
<rect x="1836.56" y="481.8" width="53.4" height="84.9" fill="url(#gr)"/><rect x="1837.56" y="481.8" width="51.4" height="84.9" fill="none" stroke="#e45c6c" stroke-width="2"/>
<rect x="1836.56" y="566.7" width="53.4" height="50.9" fill="url(#gr)"/><rect x="1837.56" y="566.7" width="51.4" height="50.9" fill="none" stroke="#e45c6c" stroke-width="2"/>
<rect x="1836.56" y="617.6" width="53.4" height="254.4" fill="url(#gr)"/><rect x="1837.56" y="617.6" width="51.4" height="254.4" fill="none" stroke="#e45c6c" stroke-width="2"/>
<rect x="1836.56" y="872" width="53.4" height="3.3" fill="url(#gl)"/><rect x="1837.56" y="872" width="51.4" height="3.3" fill="none" stroke="#aaacd4" stroke-width="2"/>
<rect x="1836.56" y="875.3" width="53.4" height="28.3" fill="url(#go)"/><rect x="1837.56" y="875.3" width="51.4" height="28.3" fill="none" stroke="#f0a04c" stroke-width="2"/>
<rect x="1836.56" y="903.6" width="53.4" height="18.1" fill="url(#gg)"/><rect x="1837.56" y="903.6" width="51.4" height="18.1" fill="none" stroke="#a6dc98" stroke-width="2"/>
<rect x="1836.56" y="921.7" width="53.4" height="57.9" fill="url(#gr)"/><rect x="1837.56" y="921.7" width="51.4" height="57.9" fill="none" stroke="#e45c6c" stroke-width="2"/>
<text x="150.13" y="988.4" text-anchor="end" class="t" style="font-size:24px;" textLength="72.79" lengthAdjust="spacingAndGlyphs">0 kWh</text>
<text x="150.15" y="913.03" text-anchor="end" class="t" style="font-size:24px;" textLength="85.84" lengthAdjust="spacingAndGlyphs">50 kWh</text>
<text x="150.10" y="837.66" text-anchor="end" class="t" style="font-size:24px;" textLength="99.92" lengthAdjust="spacingAndGlyphs">100 kWh</text>
<text x="150.10" y="762.29" text-anchor="end" class="t" style="font-size:24px;" textLength="99.92" lengthAdjust="spacingAndGlyphs">150 kWh</text>
<text x="150.10" y="686.92" text-anchor="end" class="t" style="font-size:24px;" textLength="99.92" lengthAdjust="spacingAndGlyphs">200 kWh</text>
<text x="150.10" y="611.55" text-anchor="end" class="t" style="font-size:24px;" textLength="99.92" lengthAdjust="spacingAndGlyphs">250 kWh</text>
<text x="150.10" y="536.18" text-anchor="end" class="t" style="font-size:24px;" textLength="99.92" lengthAdjust="spacingAndGlyphs">300 kWh</text>
<text x="150.10" y="460.81" text-anchor="end" class="t" style="font-size:24px;" textLength="99.92" lengthAdjust="spacingAndGlyphs">350 kWh</text>
<text x="150.10" y="385.44" text-anchor="end" class="t" style="font-size:24px;" textLength="99.92" lengthAdjust="spacingAndGlyphs">400 kWh</text>
<text x="150.10" y="310.07" text-anchor="end" class="t" style="font-size:24px;" textLength="99.92" lengthAdjust="spacingAndGlyphs">450 kWh</text>
<text x="150.14" y="234.7" text-anchor="end" class="t" style="font-size:24px;" textLength="102.21" lengthAdjust="spacingAndGlyphs">500 kWh</text>
<text x="194.83" y="1033.3" text-anchor="middle" class="t" style="font-size:24px;" textLength="60.66" lengthAdjust="spacingAndGlyphs">15:00</text>
<text x="412.39" y="1033.3" text-anchor="middle" class="t" style="font-size:24px;" textLength="60.66" lengthAdjust="spacingAndGlyphs">18:00</text>
<text x="630.25" y="1033.3" text-anchor="middle" class="t" style="font-size:24px;" textLength="60.66" lengthAdjust="spacingAndGlyphs">21:00</text>
<text x="847.96" y="1033.3" text-anchor="middle" class="t" style="font-size:24px;" textLength="60.66" lengthAdjust="spacingAndGlyphs">00:00</text>
<text x="1065.52" y="1033.3" text-anchor="middle" class="t" style="font-size:24px;" textLength="60.66" lengthAdjust="spacingAndGlyphs">03:00</text>
<text x="1283.08" y="1033.3" text-anchor="middle" class="t" style="font-size:24px;" textLength="60.66" lengthAdjust="spacingAndGlyphs">06:00</text>
<text x="1500.64" y="1033.3" text-anchor="middle" class="t" style="font-size:24px;" textLength="60.66" lengthAdjust="spacingAndGlyphs">09:00</text>
<text x="1717.75" y="1033.3" text-anchor="middle" class="t" style="font-size:24px;" textLength="60.66" lengthAdjust="spacingAndGlyphs">12:00</text>
<text x="104.98" y="1072.5" class="hd" style="font-size:24px;" textLength="67.90" lengthAdjust="spacingAndGlyphs">Name</text>
<text x="1576.11" y="1072.5" text-anchor="end" class="hd" style="font-size:24px;" textLength="44.61" lengthAdjust="spacingAndGlyphs">Min</text>
<text x="1721.86" y="1072.5" text-anchor="end" class="hd" style="font-size:24px;" textLength="48.17" lengthAdjust="spacingAndGlyphs">Max</text>
<text x="1873.89" y="1072.5" text-anchor="end" class="hd" style="font-size:24px;" textLength="57.05" lengthAdjust="spacingAndGlyphs">Total</text>
<path d="M1881.5 1064.5 l5 5 l5 -5" fill="none" stroke="#6e9fff" stroke-width="2.2"/>
<rect x="46" y="1086" width="1860" height="2" fill="#45464b"/>
<rect x="62" y="1106" width="28" height="8" rx="4" fill="#e35d6c"/>
<text x="106.46" y="1117.7" class="dim" style="font-size:24px;" textLength="69.42" lengthAdjust="spacingAndGlyphs">Totaal</text>
<text x="1597.98" y="1117.7" text-anchor="end" class="t" style="font-size:24px;" textLength="98.96" lengthAdjust="spacingAndGlyphs">172 kWh</text>
<text x="1739.75" y="1117.7" text-anchor="end" class="t" style="font-size:24px;" textLength="102.92" lengthAdjust="spacingAndGlyphs">524 kWh</text>
<text x="1889.99" y="1117.7" text-anchor="end" class="t" style="font-size:24px;" textLength="117.47" lengthAdjust="spacingAndGlyphs">8.68 MWh</text>
<rect x="46" y="1132" width="1860" height="2" fill="#45464b"/>
<rect x="62" y="1152" width="28" height="8" rx="4" fill="#e35d6c"/>
<text x="104.97" y="1163.7" class="t" style="font-size:24px;" textLength="142.35" lengthAdjust="spacingAndGlyphs">Regelkasten</text>
<text x="1598.12" y="1163.7" text-anchor="end" class="t" style="font-size:24px;" textLength="110.23" lengthAdjust="spacingAndGlyphs">22.9 kWh</text>
<text x="1739.71" y="1163.7" text-anchor="end" class="t" style="font-size:24px;" textLength="100.40" lengthAdjust="spacingAndGlyphs">182 kWh</text>
<text x="1889.97" y="1163.7" text-anchor="end" class="t" style="font-size:24px;" textLength="115.94" lengthAdjust="spacingAndGlyphs">2.59 MWh</text>
<rect x="46" y="1178" width="1860" height="2" fill="#45464b"/>
<rect x="62" y="1198" width="28" height="8" rx="4" fill="#e35d6c"/>
<text x="105.13" y="1209.7" class="t" style="font-size:24px;" textLength="83.65" lengthAdjust="spacingAndGlyphs">UPS'en</text>
<text x="1598.10" y="1209.7" text-anchor="end" class="t" style="font-size:24px;" textLength="108.77" lengthAdjust="spacingAndGlyphs">55.0 kWh</text>
<text x="1739.78" y="1209.7" text-anchor="end" class="t" style="font-size:24px;" textLength="107.74" lengthAdjust="spacingAndGlyphs">58.7 kWh</text>
<text x="1889.96" y="1209.7" text-anchor="end" class="t" style="font-size:24px;" textLength="114.95" lengthAdjust="spacingAndGlyphs">1.36 MWh</text>
<rect x="46" y="1224" width="1860" height="2" fill="#45464b"/>
<rect x="62" y="1244" width="28" height="8" rx="4" fill="#e35d6c"/>
<text x="105.90" y="1255.7" class="t" style="font-size:24px;" textLength="92.82" lengthAdjust="spacingAndGlyphs">Studio's</text>
<text x="1598.08" y="1255.7" text-anchor="end" class="t" style="font-size:24px;" textLength="107.47" lengthAdjust="spacingAndGlyphs">9.35 kWh</text>
<text x="1739.78" y="1255.7" text-anchor="end" class="t" style="font-size:24px;" textLength="107.47" lengthAdjust="spacingAndGlyphs">45.6 kWh</text>
<text x="1889.91" y="1255.7" text-anchor="end" class="t" style="font-size:24px;" textLength="100.40" lengthAdjust="spacingAndGlyphs">643 kWh</text>
<rect x="46" y="1270" width="1860" height="2" fill="#45464b"/>
<rect x="62" y="1290" width="28" height="8" rx="4" fill="#f2a048"/>
<text x="106.89" y="1301.7" class="t" style="font-size:24px;" textLength="243.11" lengthAdjust="spacingAndGlyphs">Verdelers bouwdelen</text>
<text x="1597.99" y="1301.7" text-anchor="end" class="t" style="font-size:24px;" textLength="105.58" lengthAdjust="spacingAndGlyphs">8.11 kWh</text>
<text x="1739.78" y="1301.7" text-anchor="end" class="t" style="font-size:24px;" textLength="107.47" lengthAdjust="spacingAndGlyphs">32.1 kWh</text>
<text x="1889.91" y="1301.7" text-anchor="end" class="t" style="font-size:24px;" textLength="100.40" lengthAdjust="spacingAndGlyphs">480 kWh</text>
<rect x="46" y="1316" width="1860" height="2" fill="#45464b"/>
<rect x="62" y="1336" width="28" height="8" rx="4" fill="#e35d6c"/>
<text x="105.01" y="1347.7" class="t" style="font-size:24px;" textLength="85.26" lengthAdjust="spacingAndGlyphs">Keuken</text>
<text x="1598.08" y="1347.7" text-anchor="end" class="t" style="font-size:24px;" textLength="107.47" lengthAdjust="spacingAndGlyphs">5.03 kWh</text>
<text x="1739.78" y="1347.7" text-anchor="end" class="t" style="font-size:24px;" textLength="107.47" lengthAdjust="spacingAndGlyphs">64.6 kWh</text>
<text x="1889.91" y="1347.7" text-anchor="end" class="t" style="font-size:24px;" textLength="100.40" lengthAdjust="spacingAndGlyphs">473 kWh</text>
<rect x="46" y="1362" width="1860" height="2" fill="#45464b"/>
<rect x="62" y="1382" width="28" height="8" rx="4" fill="#9fd98f"/>
<text x="104.93" y="1393.7" class="t" style="font-size:24px;" textLength="216.30" lengthAdjust="spacingAndGlyphs">Klimaatbeheersing</text>
<text x="1597.99" y="1393.7" text-anchor="end" class="t" style="font-size:24px;" textLength="105.58" lengthAdjust="spacingAndGlyphs">6.11 kWh</text>
<text x="1739.78" y="1393.7" text-anchor="end" class="t" style="font-size:24px;" textLength="107.47" lengthAdjust="spacingAndGlyphs">16.7 kWh</text>
<text x="1889.91" y="1393.7" text-anchor="end" class="t" style="font-size:24px;" textLength="100.40" lengthAdjust="spacingAndGlyphs">244 kWh</text>
<rect x="46" y="1408" width="1860" height="2" fill="#45464b"/>
<rect x="62" y="1428" width="28" height="8" rx="4" fill="#f2a048"/>
<text x="104.93" y="1439.7" class="t" style="font-size:24px;" textLength="138.01" lengthAdjust="spacingAndGlyphs">Laadpunten</text>
<text x="1598.01" y="1439.7" text-anchor="end" class="t" style="font-size:24px;" textLength="87.68" lengthAdjust="spacingAndGlyphs">140 Wh</text>
<text x="1739.78" y="1439.7" text-anchor="end" class="t" style="font-size:24px;" textLength="107.47" lengthAdjust="spacingAndGlyphs">31.3 kWh</text>
<text x="1889.91" y="1439.7" text-anchor="end" class="t" style="font-size:24px;" textLength="100.40" lengthAdjust="spacingAndGlyphs">218 kWh</text>
<rect x="46" y="1454" width="1860" height="2" fill="#45464b"/>
<rect x="62" y="1474" width="28" height="8" rx="4" fill="#aaaad2"/>
<text x="104.84" y="1485.7" class="t" style="font-size:24px;" textLength="66.89" lengthAdjust="spacingAndGlyphs">Liften</text>
<text x="1598.01" y="1485.7" text-anchor="end" class="t" style="font-size:24px;" textLength="87.68" lengthAdjust="spacingAndGlyphs">586 Wh</text>
<text x="1739.78" y="1485.7" text-anchor="end" class="t" style="font-size:24px;" textLength="107.47" lengthAdjust="spacingAndGlyphs">4.78 kWh</text>
<text x="1889.98" y="1485.7" text-anchor="end" class="t" style="font-size:24px;" textLength="107.47" lengthAdjust="spacingAndGlyphs">48.2 kWh</text>
<rect x="46" y="1500" width="1860" height="2" fill="#45464b"/>
<path d="M1991.52 957.27 A174 174 0 1 1 2328.14 934.91 L2258.8 922.18 A103.5 103.5 0 1 0 2058.57 935.48 Z" fill="#979bba"/>
<path d="M2328.14 934.91 A174 174 0 0 1 2322.48 957.27 L2255.43 935.48 A103.5 103.5 0 0 0 2258.8 922.18 Z" fill="#22252b"/>
<text x="2155.88" y="924.7" text-anchor="middle" class="gauge" style="font-size:33.4px;" textLength="164.90" lengthAdjust="spacingAndGlyphs">8.68 MWh</text>
<rect x="46" y="1992.58" width="313.6" height="73.42" rx="4" fill="#474a59"/>
<path d="M46 1996.58 a4 4 0 0 1 4 -4 h305.6 a4 4 0 0 1 4 4 z" fill="#a7a9d0"/>
<text x="115.20" y="1984.28" class="bv" style="font-size:49px;" textLength="82.56" lengthAdjust="spacingAndGlyphs">473</text>
<text x="210.69" y="1984.28" class="bv" style="font-size:38.7px;" textLength="80.29" lengthAdjust="spacingAndGlyphs">kWh</text>
<text x="202.57" y="2097.7" text-anchor="middle" class="t" style="font-size:28px;" textLength="100.08" lengthAdjust="spacingAndGlyphs">Keuken</text>
<rect x="379.6" y="2028.13" width="313.6" height="37.87" rx="4" fill="#474a59"/>
<path d="M379.6 2032.13 a4 4 0 0 1 4 -4 h305.6 a4 4 0 0 1 4 4 z" fill="#a7a9d0"/>
<text x="447.75" y="2019.83" class="bv" style="font-size:49px;" textLength="82.55" lengthAdjust="spacingAndGlyphs">244</text>
<text x="544.03" y="2019.83" class="bv" style="font-size:38.7px;" textLength="80.29" lengthAdjust="spacingAndGlyphs">kWh</text>
<text x="536.19" y="2097.7" text-anchor="middle" class="t" style="font-size:28px;" textLength="252.78" lengthAdjust="spacingAndGlyphs">Klimaatbeheersing</text>
<rect x="713.2" y="2032.16" width="313.6" height="33.84" rx="4" fill="#474a59"/>
<path d="M713.2 2036.16 a4 4 0 0 1 4 -4 h305.6 a4 4 0 0 1 4 4 z" fill="#a7a9d0"/>
<text x="781.70" y="2023.86" class="bv" style="font-size:49px;" textLength="82.54" lengthAdjust="spacingAndGlyphs">218</text>
<text x="877.28" y="2023.86" class="bv" style="font-size:38.7px;" textLength="80.29" lengthAdjust="spacingAndGlyphs">kWh</text>
<text x="869.74" y="2097.7" text-anchor="middle" class="t" style="font-size:28px;" textLength="161.08" lengthAdjust="spacingAndGlyphs">Laadpunten</text>
<rect x="1046.8" y="2058.5" width="313.6" height="7.5" rx="4" fill="#474a59"/>
<path d="M1046.8 2062.5 a4 4 0 0 1 4 -4 h305.6 a4 4 0 0 1 4 4 z" fill="#a7a9d0"/>
<text x="1109.22" y="2050.2" class="bv" style="font-size:49px;" textLength="96.45" lengthAdjust="spacingAndGlyphs">48.2</text>
<text x="1218.27" y="2050.2" class="bv" style="font-size:38.7px;" textLength="80.29" lengthAdjust="spacingAndGlyphs">kWh</text>
<text x="1203.36" y="2097.7" text-anchor="middle" class="t" style="font-size:28px;" textLength="79.75" lengthAdjust="spacingAndGlyphs">Liften</text>
<rect x="1380.4" y="1666" width="313.6" height="402" rx="4" fill="#474a59"/>
<path d="M1380.4 1670 a4 4 0 0 1 4 -4 h305.6 a4 4 0 0 1 4 4 z" fill="#a7a9d0"/>
<text x="1434.14" y="1657.7" class="bv" style="font-size:49px;" textLength="99.78" lengthAdjust="spacingAndGlyphs">2.59</text>
<text x="1546.15" y="1657.7" class="bv" style="font-size:38.7px;" textLength="93.27" lengthAdjust="spacingAndGlyphs">MWh</text>
<text x="1536.96" y="2100" text-anchor="middle" class="t" style="font-size:28px;" textLength="166.94" lengthAdjust="spacingAndGlyphs">Regelkasten</text>
<rect x="1714" y="1966.2" width="313.6" height="99.8" rx="4" fill="#474a59"/>
<path d="M1714 1970.2 a4 4 0 0 1 4 -4 h305.6 a4 4 0 0 1 4 4 z" fill="#a7a9d0"/>
<text x="1782.55" y="1957.9" class="bv" style="font-size:49px;" textLength="82.54" lengthAdjust="spacingAndGlyphs">643</text>
<text x="1878.03" y="1957.9" class="bv" style="font-size:38.7px;" textLength="80.29" lengthAdjust="spacingAndGlyphs">kWh</text>
<text x="1870.71" y="2097.7" text-anchor="middle" class="t" style="font-size:28px;" textLength="108.25" lengthAdjust="spacingAndGlyphs">Studio's</text>
<rect x="2047.6" y="1854.91" width="313.6" height="211.09" rx="4" fill="#474a59"/>
<path d="M2047.6 1858.91 a4 4 0 0 1 4 -4 h305.6 a4 4 0 0 1 4 4 z" fill="#a7a9d0"/>
<text x="2102.31" y="1846.61" class="bv" style="font-size:49px;" textLength="96.42" lengthAdjust="spacingAndGlyphs">1.36</text>
<text x="2211.14" y="1846.61" class="bv" style="font-size:38.7px;" textLength="93.27" lengthAdjust="spacingAndGlyphs">MWh</text>
<text x="2203.99" y="2097.7" text-anchor="middle" class="t" style="font-size:28px;" textLength="57.47" lengthAdjust="spacingAndGlyphs">UPS</text>
<rect x="2381.2" y="1991.5" width="313.6" height="74.5" rx="4" fill="#474a59"/>
<path d="M2381.2 1995.5 a4 4 0 0 1 4 -4 h305.6 a4 4 0 0 1 4 4 z" fill="#a7a9d0"/>
<text x="2450.25" y="1983.2" class="bv" style="font-size:49px;" textLength="82.56" lengthAdjust="spacingAndGlyphs">480</text>
<text x="2546.04" y="1983.2" class="bv" style="font-size:38.7px;" textLength="80.29" lengthAdjust="spacingAndGlyphs">kWh</text>
<text x="2538.93" y="2097.7" text-anchor="middle" class="t" style="font-size:28px;" textLength="284.38" lengthAdjust="spacingAndGlyphs">Verdelers bouwdelen</text>
<text x="2423.55" y="228" class="t" style="font-size:28px;" textLength="144.51" lengthAdjust="spacingAndGlyphs">Categorie-</text>
<text x="2423.90" y="271.3" class="t" style="font-size:28px;" textLength="122.56" lengthAdjust="spacingAndGlyphs">overzicht</text>
<text x="2423.79" y="309.5" class="dim" style="font-size:24px;" textLength="142.72" lengthAdjust="spacingAndGlyphs">Categorieën</text>
<polygon points="2638,246.2 2641.82,253.94 2650.36,255.18 2644.18,261.21 2645.64,269.72 2638,265.7 2630.36,269.72 2631.82,261.21 2625.64,255.18 2634.18,253.94" fill="#e4843a" stroke="#e4843a" stroke-width="2.5" stroke-linejoin="round"/>
<rect x="2408" y="335.9" width="270" height="2" fill="#2e3035"/>
<text x="2422.78" y="386.1" class="t" style="font-size:28px;" textLength="100.08" lengthAdjust="spacingAndGlyphs">Keuken</text>
<text x="2423.79" y="423.7" class="dim" style="font-size:24px;" textLength="142.72" lengthAdjust="spacingAndGlyphs">Categorieën</text>
<polygon points="2638,382.35 2641.82,390.09 2650.36,391.33 2644.18,397.36 2645.64,405.87 2638,401.85 2630.36,405.87 2631.82,397.36 2625.64,391.33 2634.18,390.09" fill="none" stroke="#d6d6e2" stroke-width="2.9" stroke-linejoin="round"/>
<rect x="2408" y="450" width="270" height="2" fill="#2e3035"/>
<text x="2422.73" y="500.1" class="t" style="font-size:28px;" textLength="192.44" lengthAdjust="spacingAndGlyphs">Klimaatbehe...</text>
<text x="2423.79" y="537.7" class="dim" style="font-size:24px;" textLength="142.72" lengthAdjust="spacingAndGlyphs">Categorieën</text>
<polygon points="2638,496.35 2641.82,504.09 2650.36,505.33 2644.18,511.36 2645.64,519.87 2638,515.85 2630.36,519.87 2631.82,511.36 2625.64,505.33 2634.18,504.09" fill="none" stroke="#d6d6e2" stroke-width="2.9" stroke-linejoin="round"/>
<rect x="2408" y="564" width="270" height="2" fill="#2e3035"/>
<text x="2422.70" y="614.1" class="t" style="font-size:28px;" textLength="161.08" lengthAdjust="spacingAndGlyphs">Laadpunten</text>
<text x="2423.79" y="651.7" class="dim" style="font-size:24px;" textLength="142.72" lengthAdjust="spacingAndGlyphs">Categorieën</text>
<polygon points="2638,610.35 2641.82,618.09 2650.36,619.33 2644.18,625.36 2645.64,633.87 2638,629.85 2630.36,633.87 2631.82,625.36 2625.64,619.33 2634.18,618.09" fill="none" stroke="#d6d6e2" stroke-width="2.9" stroke-linejoin="round"/>
<rect x="2408" y="678" width="270" height="2" fill="#2e3035"/>
<text x="2422.54" y="728.1" class="t" style="font-size:28px;" textLength="79.75" lengthAdjust="spacingAndGlyphs">Liften</text>
<text x="2423.79" y="765.7" class="dim" style="font-size:24px;" textLength="142.72" lengthAdjust="spacingAndGlyphs">Categorieën</text>
<polygon points="2638,724.35 2641.82,732.09 2650.36,733.33 2644.18,739.36 2645.64,747.87 2638,743.85 2630.36,747.87 2631.82,739.36 2625.64,733.33 2634.18,732.09" fill="none" stroke="#d6d6e2" stroke-width="2.9" stroke-linejoin="round"/>
<rect x="2408" y="792" width="270" height="2" fill="#2e3035"/>
<text x="2422.74" y="842.1" class="t" style="font-size:28px;" textLength="166.94" lengthAdjust="spacingAndGlyphs">Regelkasten</text>
<text x="2423.79" y="879.7" class="dim" style="font-size:24px;" textLength="142.72" lengthAdjust="spacingAndGlyphs">Categorieën</text>
<polygon points="2638,838.35 2641.82,846.09 2650.36,847.33 2644.18,853.36 2645.64,861.87 2638,857.85 2630.36,861.87 2631.82,853.36 2625.64,847.33 2634.18,846.09" fill="none" stroke="#d6d6e2" stroke-width="2.9" stroke-linejoin="round"/>
<rect x="2408" y="906" width="270" height="2" fill="#2e3035"/>
<text x="2423.78" y="956.1" class="t" style="font-size:28px;" textLength="108.25" lengthAdjust="spacingAndGlyphs">Studio's</text>
<text x="2423.79" y="993.7" class="dim" style="font-size:24px;" textLength="142.72" lengthAdjust="spacingAndGlyphs">Categorieën</text>
<polygon points="2638,952.35 2641.82,960.09 2650.36,961.33 2644.18,967.36 2645.64,975.87 2638,971.85 2630.36,975.87 2631.82,967.36 2625.64,961.33 2634.18,960.09" fill="none" stroke="#d6d6e2" stroke-width="2.9" stroke-linejoin="round"/>
<rect x="2408" y="1020" width="270" height="2" fill="#2e3035"/>
<text x="2422.99" y="1070.1" class="t" style="font-size:28px;" textLength="57.79" lengthAdjust="spacingAndGlyphs">UPS</text>
<text x="2423.79" y="1107.7" class="dim" style="font-size:24px;" textLength="142.72" lengthAdjust="spacingAndGlyphs">Categorieën</text>
<polygon points="2638,1066.35 2641.82,1074.09 2650.36,1075.33 2644.18,1081.36 2645.64,1089.87 2638,1085.85 2630.36,1089.87 2631.82,1081.36 2625.64,1075.33 2634.18,1074.09" fill="none" stroke="#d6d6e2" stroke-width="2.9" stroke-linejoin="round"/>
<rect x="2408" y="1134" width="270" height="2" fill="#2e3035"/>
<text x="2424.99" y="1183.8" class="t" style="font-size:28px;" textLength="126.57" lengthAdjust="spacingAndGlyphs">Verdelers</text>
<text x="2423.11" y="1228.3" class="t" style="font-size:28px;" textLength="149.51" lengthAdjust="spacingAndGlyphs">bouwdelen</text>
<text x="2423.79" y="1266.4" class="dim" style="font-size:24px;" textLength="142.72" lengthAdjust="spacingAndGlyphs">Categorieën</text>
<polygon points="2638,1202.5 2641.82,1210.24 2650.36,1211.48 2644.18,1217.51 2645.64,1226.02 2638,1222 2630.36,1226.02 2631.82,1217.51 2625.64,1211.48 2634.18,1210.24" fill="none" stroke="#d6d6e2" stroke-width="2.9" stroke-linejoin="round"/>
<rect x="2408" y="1291.8" width="270" height="2" fill="#2e3035"/>
</svg>
</body></html>
